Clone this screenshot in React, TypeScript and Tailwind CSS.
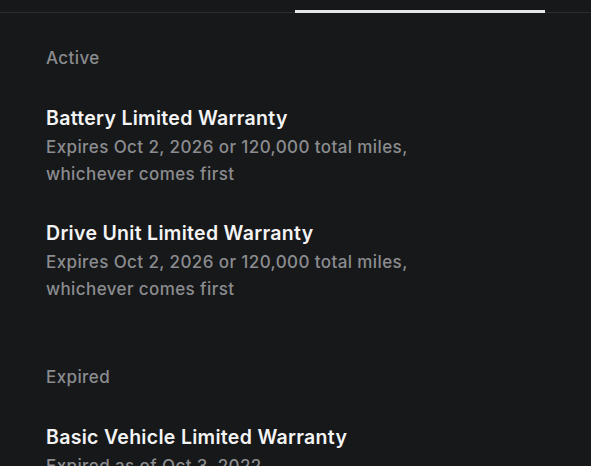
const active = [
  {
    title: "Battery Limited Warranty",
    lines: ["Expires Oct 2, 2026 or 120,000 total miles,", "whichever comes first"],
  },
  {
    title: "Drive Unit Limited Warranty",
    lines: ["Expires Oct 2, 2026 or 120,000 total miles,", "whichever comes first"],
  },
];

const expired = [
  {
    title: "Basic Vehicle Limited Warranty",
    lines: ["Expired as of Oct 3, 2022"],
  },
];

function Warranty({ title, lines }: { title: string; lines: string[] }) {
  return (
    <div className="flex flex-col">
      <h3 className="text-[19.5px] leading-[28px] font-semibold tracking-[0.3px] text-[#f4f4f4] mb-[2px] whitespace-nowrap">
        {title}
      </h3>
      {lines.map((line, i) => (
        <p key={i} className="text-[17px] leading-[27px] font-medium tracking-[0.4px] text-[#8b8c8f] whitespace-nowrap">
          {line}
        </p>
      ))}
    </div>
  );
}

export default function App() {
  return (
    <div className="w-[591px] h-[466px] overflow-hidden bg-[#17181a] font-['Inter',sans-serif] antialiased">
      <div className="h-[13px] flex items-end border-b border-[#2c2d30]">
        <div className="ml-[295px] w-[250px] h-[3px] bg-[#e6e6e6] -mb-px" />
      </div>

      <div className="flex flex-col pl-[46px] pt-[33px]">
        <p className="text-[17px] leading-[24px] font-medium tracking-[0.4px] text-[#8b8c8f]">Active</p>
        <div className="flex flex-col gap-[31px] mt-[34px]">
          {active.map((w) => (
            <Warranty key={w.title} {...w} />
          ))}
        </div>

        <p className="text-[17px] leading-[24px] font-medium tracking-[0.4px] text-[#8b8c8f] mt-[62px]">Expired</p>
        <div className="flex flex-col mt-[34px]">
          {expired.map((w) => (
            <Warranty key={w.title} {...w} />
          ))}
        </div>
      </div>
    </div>
  );
}
